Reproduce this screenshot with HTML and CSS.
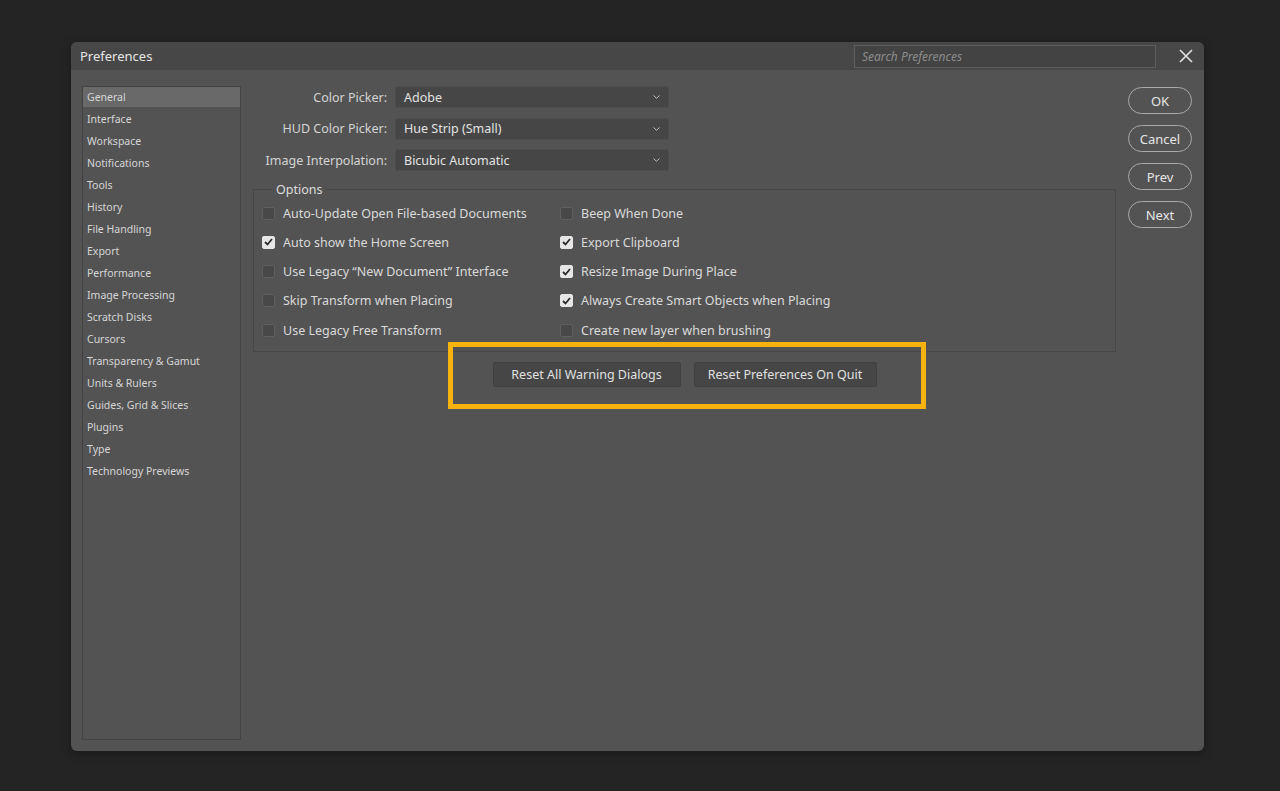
FILE: index.html
```html
<!DOCTYPE html>
<html lang="en">
<head>
  <meta charset="UTF-8">
  <meta name="viewport" content="width=device-width, initial-scale=1.0">
  <title>Preferences</title>
  <link rel="stylesheet" href="styles.css">
</head>
<body>
  <div class="dialog">
    <div class="titlebar">
      <span class="title">Preferences</span>
      <input class="search" type="text" placeholder="Search Preferences">
      <button class="close" aria-label="Close">
        <svg width="14" height="14" viewBox="0 0 14 14"><path d="M1 1 L13 13 M13 1 L1 13" stroke="#e2e2e2" stroke-width="1.6" fill="none"/></svg>
      </button>
    </div>

    <div class="dialog-body">
      <ul class="nav">
        <li class="active">General</li>
        <li>Interface</li>
        <li>Workspace</li>
        <li>Notifications</li>
        <li>Tools</li>
        <li>History</li>
        <li>File Handling</li>
        <li>Export</li>
        <li>Performance</li>
        <li>Image Processing</li>
        <li>Scratch Disks</li>
        <li>Cursors</li>
        <li>Transparency &amp; Gamut</li>
        <li>Units &amp; Rulers</li>
        <li>Guides, Grid &amp; Slices</li>
        <li>Plugins</li>
        <li>Type</li>
        <li>Technology Previews</li>
      </ul>

      <div class="panel">
        <div class="field-row">
          <label>Color Picker:</label>
          <div class="select">Adobe
            <svg class="chevron" width="7" height="4" viewBox="0 0 7 4"><path d="M0.5 0.5 L3.5 3.3 L6.5 0.5" stroke="#bdbdbd" fill="none"/></svg>
          </div>
        </div>
        <div class="field-row">
          <label>HUD Color Picker:</label>
          <div class="select">Hue Strip (Small)
            <svg class="chevron" width="7" height="4" viewBox="0 0 7 4"><path d="M0.5 0.5 L3.5 3.3 L6.5 0.5" stroke="#bdbdbd" fill="none"/></svg>
          </div>
        </div>
        <div class="field-row">
          <label>Image Interpolation:</label>
          <div class="select">Bicubic Automatic
            <svg class="chevron" width="7" height="4" viewBox="0 0 7 4"><path d="M0.5 0.5 L3.5 3.3 L6.5 0.5" stroke="#bdbdbd" fill="none"/></svg>
          </div>
        </div>

        <fieldset class="options">
          <legend>Options</legend>
          <div class="opt-grid">
            <div class="opt"><span class="box"></span>Auto-Update Open File-based Documents</div>
            <div class="opt"><span class="box"></span>Beep When Done</div>
            <div class="opt"><span class="box checked"><svg width="9" height="8" viewBox="0 0 9 8"><path d="M1 4 L3.5 6.5 L8 1" stroke="#2b2b2b" stroke-width="1.8" fill="none"/></svg></span>Auto show the Home Screen</div>
            <div class="opt"><span class="box checked"><svg width="9" height="8" viewBox="0 0 9 8"><path d="M1 4 L3.5 6.5 L8 1" stroke="#2b2b2b" stroke-width="1.8" fill="none"/></svg></span>Export Clipboard</div>
            <div class="opt"><span class="box"></span>Use Legacy “New Document” Interface</div>
            <div class="opt"><span class="box checked"><svg width="9" height="8" viewBox="0 0 9 8"><path d="M1 4 L3.5 6.5 L8 1" stroke="#2b2b2b" stroke-width="1.8" fill="none"/></svg></span>Resize Image During Place</div>
            <div class="opt"><span class="box"></span>Skip Transform when Placing</div>
            <div class="opt"><span class="box checked"><svg width="9" height="8" viewBox="0 0 9 8"><path d="M1 4 L3.5 6.5 L8 1" stroke="#2b2b2b" stroke-width="1.8" fill="none"/></svg></span>Always Create Smart Objects when Placing</div>
            <div class="opt"><span class="box"></span>Use Legacy Free Transform</div>
            <div class="opt"><span class="box"></span>Create new layer when brushing</div>
          </div>
        </fieldset>

        <div class="reset-wrap">
          <div class="reset-row">
            <span class="highlight"></span>
            <button class="btn btn-warnings">Reset All Warning Dialogs</button>
            <button class="btn btn-quit">Reset Preferences On Quit</button>
          </div>
        </div>
      </div>

      <div class="actions">
        <button class="pill">OK</button>
        <button class="pill">Cancel</button>
        <button class="pill">Prev</button>
        <button class="pill">Next</button>
      </div>
    </div>
  </div>
</body>
</html>
```

FILE: styles.css
```css
body {
  margin: 0;
  padding: 42px 0 0 71px;
  height: 791px;
  box-sizing: border-box;
  background-color: #242424;
  font-family: "Noto Sans", "Open Sans", Arial, sans-serif;
  color: #d8d8d8;
  overflow: hidden;
}
.dialog {
  width: 1133px;
  height: 709px;
  background: #535353;
  border-radius: 6px;
  overflow: hidden;
  box-shadow: 0 2px 10px rgba(0, 0, 0, 0.35);
  display: flex;
  flex-direction: column;
}
.titlebar {
  height: 28px;
  flex: none;
  background: #474747;
  display: flex;
  align-items: center;
  padding: 0 6px 0 9px;
}
.title {
  font-size: 13px;
  color: #e6e6e6;
}
.search {
  margin-left: auto;
  width: 302px;
  height: 23px;
  box-sizing: border-box;
  background: #434343;
  border: 1px solid #5e5e5e;
  padding: 0 7px;
  font-family: inherit;
  font-size: 12px;
  color: #ccc;
  outline: none;
}
.search::placeholder {
  color: #8c8c8c;
  font-style: italic;
}
.close {
  width: 24px;
  height: 24px;
  margin-left: 18px;
  padding: 0;
  background: none;
  border: none;
  display: flex;
  align-items: center;
  justify-content: center;
}
.dialog-body {
  flex: 1;
  display: flex;
  gap: 12px;
  padding: 16px 12px 11px 11px;
}
.nav {
  width: 159px;
  box-sizing: border-box;
  margin: 0;
  padding: 0;
  list-style: none;
  border: 1px solid #434343;
  font-size: 10.5px;
}
.nav li {
  height: 22px;
  line-height: 22px;
  padding-left: 4px;
  color: #d6d6d6;
}
.nav li.active {
  background: #696969;
  height: 20px;
  line-height: 20px;
  margin-bottom: 1px;
}
.panel {
  flex: 1;
  font-size: 12.5px;
}
.field-row {
  display: flex;
  align-items: center;
  gap: 8px;
  margin-bottom: 9.5px;
}
.field-row label {
  width: 134px;
  text-align: right;
  color: #d4d4d4;
  white-space: nowrap;
}
.select {
  width: 274px;
  height: 22px;
  box-sizing: border-box;
  background: #464646;
  border: 1px solid #4d4d4d;
  border-radius: 2px;
  padding: 0 8px;
  display: flex;
  align-items: center;
  justify-content: space-between;
  color: #e2e2e2;
}
.options {
  margin: 5px 0 0;
  padding: 0 0 6px 8px;
  border: 1px solid #474747;
  min-width: 0;
}
.options legend {
  margin-left: 10px;
  padding: 0 4px;
  font-size: 12.5px;
  color: #dcdcdc;
}
.opt-grid {
  display: grid;
  grid-template-columns: 298px 1fr;
  grid-auto-rows: 29.25px;
  margin-top: 1px;
}
.opt {
  display: flex;
  align-items: center;
  white-space: nowrap;
  color: #dadada;
}
.box {
  width: 13px;
  height: 13px;
  box-sizing: border-box;
  border: 1px solid #606060;
  border-radius: 2px;
  background: #484848;
  margin-right: 8px;
  display: flex;
  align-items: center;
  justify-content: center;
}
.box.checked {
  background: #e6e6e6;
  border-color: #e6e6e6;
}
.reset-wrap {
  display: flex;
  justify-content: center;
  margin-top: 10px;
}
.reset-row {
  position: relative;
  display: flex;
  gap: 13px;
}
.highlight {
  position: absolute;
  top: -20px;
  left: -45px;
  right: -49px;
  bottom: -22px;
  border: 5px solid #f6b20d;
  pointer-events: none;
}
.btn {
  height: 25px;
  padding: 0;
  background: #464646;
  border: 1px solid #404040;
  border-radius: 2px;
  font-family: inherit;
  font-size: 12.5px;
  color: #e0e0e0;
  white-space: nowrap;
}
.btn-warnings {
  width: 188px;
}
.btn-quit {
  width: 183px;
}
.actions {
  width: 64px;
  display: flex;
  flex-direction: column;
  gap: 11px;
  padding-top: 1px;
}
.pill {
  height: 27px;
  background: none;
  border: 1px solid #a9a9a9;
  border-radius: 14px;
  font-family: inherit;
  font-size: 13px;
  color: #e6e6e6;
  padding: 0;
}
```
